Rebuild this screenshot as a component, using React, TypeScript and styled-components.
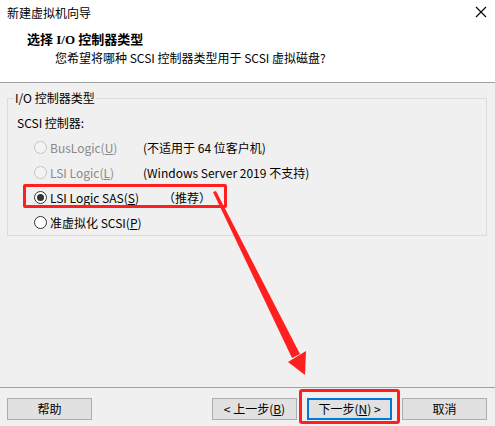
import React, { FC, ReactElement } from 'react';
import styled, { createGlobalStyle } from 'styled-components';

const GlobalStyle = createGlobalStyle`
  html, body {
    margin: 0;
    padding: 0;
    background: #f0f0f0;
  }
  body {
    font-family: "Noto Sans CJK SC", "Liberation Sans", sans-serif;
    font-size: 12px;
    color: #000;
  }
`;

type Option = {
  label: string;
  key: string;
  note?: string;
  disabled?: boolean;
  checked?: boolean;
  highlighted?: boolean;
  noteOffset?: number;
};

const options: Option[] = [
  { label: 'BusLogic(', key: 'U', note: '(不适用于 64 位客户机)', disabled: true },
  { label: 'LSI Logic(', key: 'L', note: '(Windows Server 2019 不支持)', disabled: true },
  { label: 'LSI Logic SAS(', key: 'S', note: '（推荐）', checked: true, highlighted: true, noteOffset: 20 },
  { label: '准虚拟化 SCSI(', key: 'P' },
];

const Mnemonic: FC<{ label: string; k: string; suffix?: string }> = ({ label, k, suffix }): ReactElement => (
  <>
    {label}
    <u>{k}</u>
    {suffix ?? ')'}
  </>
);

const App: FC = (): ReactElement => {
  return (
    <>
      <GlobalStyle />
      <Window>
        <TitleBar>
          <span>新建虚拟机向导</span>
          <CloseIcon width="12" height="12" viewBox="0 0 12 12">
            <path d="M1 1 L11 11 M11 1 L1 11" stroke="#000" strokeWidth="1.1" />
          </CloseIcon>
        </TitleBar>
        <Header>
          <Heading>选择 I/O 控制器类型</Heading>
          <Subtitle>您希望将哪种 SCSI 控制器类型用于 SCSI 虚拟磁盘?</Subtitle>
        </Header>
        <Body>
          <GroupBox>
            <Legend>I/O 控制器类型</Legend>
            <GroupLabel>SCSI 控制器:</GroupLabel>
            <OptionList>
              {options.map((o) => (
                <OptionRow key={o.key}>
                  <Radio $disabled={o.disabled} $checked={o.checked} />
                  <OptionLabel $disabled={o.disabled}>
                    <Mnemonic label={o.label} k={o.key} />
                  </OptionLabel>
                  {o.note && <OptionNote $offset={o.noteOffset ?? 0}>{o.note}</OptionNote>}
                  {o.highlighted && <RowHighlight />}
                </OptionRow>
              ))}
            </OptionList>
          </GroupBox>
        </Body>
        <Footer>
          <Button>帮助</Button>
          <Spacer />
          <Button>
            &lt; 上一步(<u>B</u>)
          </Button>
          <NextWrap>
            <Button $default>
              下一步(<u>N</u>) &gt;
            </Button>
            <ButtonHighlight />
          </NextWrap>
          <Button>取消</Button>
        </Footer>
        <Arrow width="495" height="426" viewBox="0 0 495 426">
          <polygon points="213,192 216,191 300,354 292,358" fill="#ff1f1f" />
          <polygon points="288,362 306,351 305,375" fill="#ff1f1f" />
        </Arrow>
      </Window>
    </>
  );
};

const Window = styled.div`
  position: relative;
  width: 495px;
  height: 426px;
  display: flex;
  flex-direction: column;
  background: #f0f0f0;
  overflow: hidden;
`;

const TitleBar = styled.div`
  height: 25px;
  padding: 0 8px 0 7px;
  display: flex;
  align-items: center;
  justify-content: space-between;
  background: #fff;
  line-height: 25px;
`;

const CloseIcon = styled.svg`
  display: block;
  margin-top: -1px;
`;

const Header = styled.div`
  height: 57px;
  background: #fff;
  border-bottom: 1px solid #a0a0a0;
  display: flex;
  flex-direction: column;
`;

const Heading = styled.div`
  margin: 6px 0 0 27px;
  font-family: "Liberation Serif", "Noto Sans CJK SC", serif;
  font-weight: 700;
  font-size: 13px;
  line-height: 18px;
`;

const Subtitle = styled.div`
  margin-left: 55px;
  line-height: 18px;
`;

const Body = styled.div`
  flex: 1;
  padding: 8px 8px 0 7px;
`;

const GroupBox = styled.fieldset`
  margin: 0;
  padding: 9px 8px 0 9px;
  border: 1px solid #dcdcdc;
  min-width: 0;
`;

const Legend = styled.legend`
  margin-left: -3px;
  padding: 0 1px;
  line-height: 14px;
`;

const GroupLabel = styled.div`
  line-height: 18px;
`;

const OptionList = styled.div`
  margin-top: 3px;
  display: flex;
  flex-direction: column;
`;

const OptionRow = styled.div`
  position: relative;
  height: 25px;
  display: flex;
  align-items: center;
  padding-left: 17px;
`;

const Radio = styled.span<{ $disabled?: boolean; $checked?: boolean }>`
  box-sizing: border-box;
  width: 13px;
  height: 13px;
  border-radius: 50%;
  border: 1px solid ${(p) => (p.$disabled ? '#c4c4c4' : '#333')};
  background: ${(p) => (p.$disabled ? '#f4f4f4' : '#fff')};
  display: flex;
  align-items: center;
  justify-content: center;
  &::after {
    content: '';
    display: ${(p) => (p.$checked ? 'block' : 'none')};
    width: 7px;
    height: 7px;
    border-radius: 50%;
    background: #333;
  }
`;

const OptionLabel = styled.span<{ $disabled?: boolean }>`
  margin-left: 3px;
  width: 93px;
  white-space: nowrap;
  color: ${(p) => (p.$disabled ? '#8a8a8a' : '#000')};
`;

const OptionNote = styled.span<{ $offset: number }>`
  margin-left: ${(p) => p.$offset}px;
  white-space: nowrap;
`;

const RowHighlight = styled.span`
  position: absolute;
  left: 6px;
  top: -1px;
  width: 204px;
  height: 24px;
  box-sizing: border-box;
  border: 3px solid #ff1f1f;
  border-radius: 2px;
  pointer-events: none;
`;

const Footer = styled.div`
  height: 38px;
  border-top: 1px solid #a0a0a0;
  display: flex;
  align-items: flex-start;
  gap: 10px;
  padding: 10px 8px 0 7px;
  box-sizing: border-box;
  height: 39px;
`;

const Spacer = styled.div`
  flex: 1;
`;

const NextWrap = styled.div`
  position: relative;
  display: flex;
`;

const Button = styled.button<{ $default?: boolean }>`
  box-sizing: border-box;
  width: 85px;
  height: 22px;
  padding: 0;
  font-family: "Noto Sans CJK SC", "Liberation Sans", sans-serif;
  font-size: 12px;
  color: #000;
  background: #e1e1e1;
  border: ${(p) => (p.$default ? '2px solid #0078d7' : '1px solid #adadad')};
  line-height: 18px;
`;

const ButtonHighlight = styled.span`
  position: absolute;
  left: -8px;
  top: -9px;
  width: 101px;
  height: 35px;
  box-sizing: border-box;
  border: 3px solid #ff1f1f;
  border-radius: 3px;
  pointer-events: none;
`;

const Arrow = styled.svg`
  position: absolute;
  left: 0;
  top: 0;
  pointer-events: none;
`;

export default App;
